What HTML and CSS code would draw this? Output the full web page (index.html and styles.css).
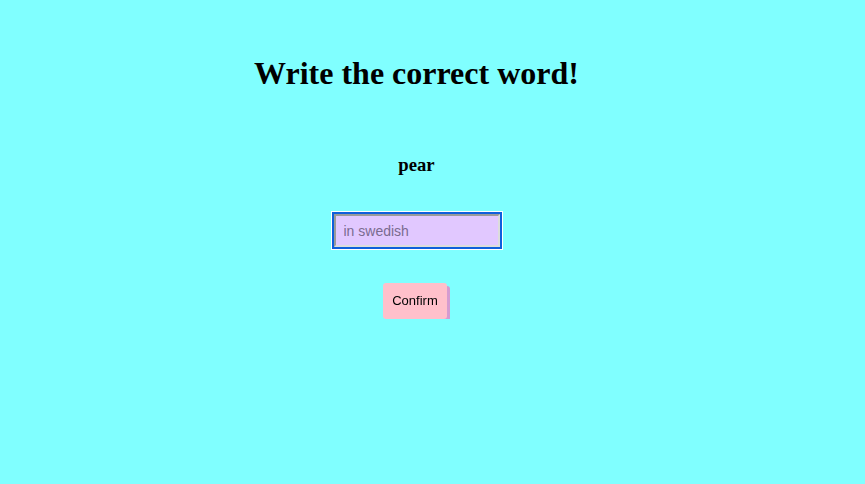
FILE: index.html
```html
<!DOCTYPE html>
<html>
<head>
<meta charset="utf-8">
<link rel="stylesheet" href="styles.css">
</head>
<body>
<div class="page">
  <h1 class="title">Write the correct word!</h1>
  <h3 class="word">pear</h3>
  <div class="field"><input class="answer" type="text" placeholder="in swedish" autofocus></div>
  <div class="actions"><button class="confirm" type="button">Confirm</button></div>
</div>
</body>
</html>
```
FILE: styles.css
```css
html, body {
  margin: 0;
  padding: 0;
  background: #80ffff;
}
.page {
  padding: 1px 32px 0 0;
  text-align: center;
  font-family: "Liberation Serif", serif;
  color: #000;
}
.title {
  font-size: 32px;
  font-weight: bold;
  margin: 54px 0 0;
  line-height: 37px;
}
.word {
  font-size: 18.72px;
  font-weight: bold;
  margin: 62px 0 0;
  line-height: 22px;
}
.field {
  display: flex;
  justify-content: center;
  margin-top: 38px;
}
.answer {
  -webkit-appearance: none;
  appearance: none;
  box-sizing: border-box;
  width: 166px;
  height: 33px;
  margin: 0;
  padding: 0 8px;
  font-family: "Liberation Sans", sans-serif;
  font-size: 14px;
  background: #e1c8ff;
  border: 2px solid;
  border-color: #9a9a9a #dcdcdc #dcdcdc #9a9a9a;
  color: #000;
  outline: 2px solid #0f5fdc;
  outline-offset: 0;
  box-shadow: 0 0 0 3px #ffffff;
}
.answer:focus {
  outline: 2px solid #0f5fdc;
  outline-offset: 0;
}
.answer::placeholder {
  color: #7a6b8f;
}
.actions {
  display: flex;
  justify-content: center;
  margin-top: 36px;
  padding-right: 3px;
}
.confirm {
  -webkit-appearance: none;
  appearance: none;
  position: relative;
  box-sizing: border-box;
  width: 64px;
  height: 36px;
  margin: 0;
  font-family: "Liberation Sans", sans-serif;
  font-size: 13px;
  line-height: 16px;
  background: #ffc0cb;
  border: none;
  border-radius: 3px;
  box-shadow: 3px 3px 0 0 #d59bd0;
  color: #000;
  padding: 0;
}
.confirm::after {
  content: "";
  position: absolute;
  left: 3px;
  top: 3px;
  width: 64px;
  height: 36px;
  border-radius: 3px;
  background: #d59bd0;
  z-index: -1;
}
```
